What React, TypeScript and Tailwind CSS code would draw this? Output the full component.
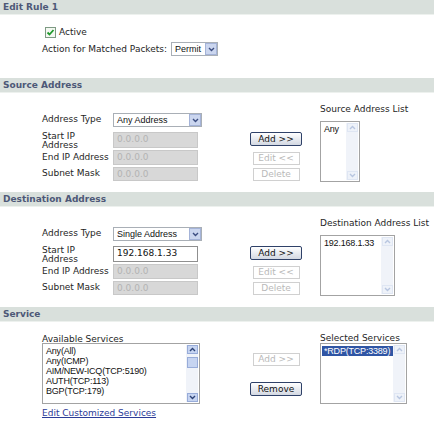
import React from "react";

const verdana = "font-['DejaVu_Sans',Verdana,sans-serif]";
const arial = "font-['Liberation_Sans',Arial,sans-serif]";

function Chevron({ up, color }: { up?: boolean; color: string }) {
  return (
    <svg width="7" height="5" viewBox="0 0 7 5">
      <path d={up ? "M1 4L3.5 1.5L6 4" : "M1 1L3.5 3.5L6 1"} stroke={color} strokeWidth="1.4" fill="none" />
    </svg>
  );
}

function Header({ title }: { title: string }) {
  return (
    <div className="h-[15px] bg-[#d9e0dc] border-b border-[#edf1ee] pl-[3px] flex items-center text-[9px] font-bold leading-none text-[#4d5877]">
      {title}
    </div>
  );
}

function Select({ value, className }: { value: string; className: string }) {
  return (
    <div className={`${className} h-[14px] border border-[#a9afb6] bg-white flex items-center`}>
      <span className={`${arial} flex-1 pl-[3px] text-[9px] leading-none text-[#111] whitespace-nowrap`}>{value}</span>
      <div className="w-[12px] h-[12px] bg-[#cbd6ef] border border-[#a4b3d8] flex items-center justify-center">
        <Chevron color="#3b4d80" />
      </div>
    </div>
  );
}

function Field({ value, disabled }: { value: string; disabled?: boolean }) {
  return (
    <div
      className={`w-[85px] h-full border flex items-center pl-[3px] text-[9px] leading-none ${
        disabled ? "bg-[#d8d8d8] border-[#c8c8c8] text-[#b3b3b3]" : "bg-white border-[#8f8f8f] text-[#111]"
      }`}
    >
      {value}
    </div>
  );
}

function Btn({ label, disabled }: { label: string; disabled?: boolean }) {
  return disabled ? (
    <div className="w-[47px] h-[13px] border border-[#d0d0d0] bg-white flex items-center justify-center text-[9px] leading-none text-[#b9b9b9]">
      {label}
    </div>
  ) : (
    <div className="w-[52px] h-[14px] border border-[#2f4168] rounded-[2px] bg-gradient-to-b from-[#ffffff] to-[#d3d8e2] flex items-center justify-center text-[9px] leading-none text-[#111]">
      {label}
    </div>
  );
}

function ListBox({
  items,
  className,
  enabled,
  selected,
}: {
  items: string[];
  className: string;
  enabled?: boolean;
  selected?: number;
}) {
  const box = enabled ? "bg-[#c6d4f1] border-[#98acd9]" : "bg-[#eef2f9] border-[#dfe6f3]";
  const arrow = enabled ? "#2d4377" : "#b8c6e0";
  return (
    <div className={`${className} h-[61px] border border-[#a3a3a3] bg-white flex`}>
      <div className={`${arial} flex-1 pt-[2px] pl-[1px] text-[9px] leading-[10px] text-[#111] tracking-[-0.2px]`}>
        {items.map((it, i) => (
          <div
            key={it}
            className={`pl-[2px] whitespace-nowrap ${i === selected ? "bg-[#2f55a4] text-white" : ""}`}
          >
            {it}
          </div>
        ))}
      </div>
      <div className="w-[12px] my-[1px] mr-[1px] bg-[#f0f3f9] flex flex-col items-center">
        <div className={`w-[11px] h-[9px] flex items-center justify-center border ${box}`}>
          <Chevron up color={arrow} />
        </div>
        {enabled && <div className="w-[11px] h-[11px] mt-[3px] bg-[#c6d4f1] border border-[#98acd9]" />}
        <div className="flex-1" />
        <div className={`w-[11px] h-[9px] flex items-center justify-center border ${box}`}>
          <Chevron color={arrow} />
        </div>
      </div>
    </div>
  );
}

function AddressForm({ type, start, single }: { type: string; start: string; single?: boolean }) {
  return (
    <div className="grid grid-cols-[71px_auto] items-center">
      <div className="h-[14px] flex items-center">Address Type</div>
      <Select value={type} className="w-[89px]" />
      <div className="mt-[4px] h-[17px] leading-[9px] pt-[1px]">Start IP Address</div>
      <div className="mt-[4px] h-[16px]">
        <Field value={start} disabled={!single} />
      </div>
      <div className="mt-[2px] h-[15px] flex items-center whitespace-nowrap">End IP Address</div>
      <div className="mt-[2px] h-[15px]">
        <Field value="0.0.0.0" disabled />
      </div>
      <div className="mt-[2px] h-[14px] flex items-center">Subnet Mask</div>
      <div className="mt-[2px] h-[14px]">
        <Field value="0.0.0.0" disabled />
      </div>
    </div>
  );
}

function AddressSection({
  title,
  type,
  start,
  single,
  listLabel,
  listItems,
  listWidth,
  height,
}: {
  title: string;
  type: string;
  start: string;
  single?: boolean;
  listLabel: string;
  listItems: string[];
  listWidth: string;
  height: string;
}) {
  return (
    <>
      <Header title={title} />
      <div className={`${height} flex`}>
        <div className="w-[250px] pl-[42px] pt-[20px]">
          <AddressForm type={type} start={start} single={single} />
        </div>
        <div className="w-[70px] pt-[39px]">
          <div className="w-[52px] flex flex-col items-center">
            <Btn label="Add >>" />
            <div className="mt-[6px]">
              <Btn label="Edit <<" disabled />
            </div>
            <div className="mt-[3px]">
              <Btn label="Delete" disabled />
            </div>
          </div>
        </div>
        <div className="pt-[11px]">
          <div className="h-[10px] leading-[10px] whitespace-nowrap">{listLabel}</div>
          <div className="mt-[7px]">
            <ListBox items={listItems} className={listWidth} />
          </div>
        </div>
      </div>
    </>
  );
}

export default function App() {
  return (
    <div className={`${verdana} w-[434px] h-[421px] overflow-hidden bg-white text-[9px] text-[#252525]`}>
      <Header title="Edit Rule 1" />
      <div className="h-[63px] pl-[42px] pt-[12px]">
        <div className="flex items-center h-[11px] pl-[3px]">
          <svg width="11" height="11" viewBox="0 0 11 11">
            <rect x="0.5" y="0.5" width="10" height="10" fill="#f4f8f2" stroke="#7d9a83" />
            <path d="M2.5 5.5L4.5 7.5L8.5 3" stroke="#1f9a2c" strokeWidth="1.8" fill="none" />
          </svg>
          <span className="ml-[3px] leading-none">Active</span>
        </div>
        <div className="mt-[4px] h-[14px] flex items-center">
          <span className="leading-none whitespace-nowrap">Action for Matched Packets:</span>
          <Select value="Permit" className="ml-[4px] w-[47px]" />
        </div>
      </div>

      <AddressSection
        title="Source Address"
        type="Any Address"
        start="0.0.0.0"
        listLabel="Source Address List"
        listItems={["Any"]}
        listWidth="w-[40px]"
        height="h-[99px]"
      />
      <AddressSection
        title="Destination Address"
        type="Single Address"
        start="192.168.1.33"
        single
        listLabel="Destination Address List"
        listItems={["192.168.1.33"]}
        listWidth="w-[75px]"
        height="h-[100px]"
      />

      <Header title="Service" />
      <div className="flex">
        <div className="w-[250px] pl-[42px] pt-[12px]">
          <div className="h-[10px] leading-[10px]">Available Services</div>
          <div className="mt-[-1px]">
            <ListBox
              items={["Any(All)", "Any(ICMP)", "AIM/NEW-ICQ(TCP:5190)", "AUTH(TCP:113)", "BGP(TCP:179)"]}
              className="w-[158px]"
              enabled
            />
          </div>
          <div className="mt-[4px] leading-[10px] text-[#2c3c98] underline">Edit Customized Services</div>
        </div>
        <div className="w-[70px] pt-[31px]">
          <div className="w-[52px] flex flex-col items-center">
            <Btn label="Add >>" disabled />
            <div className="mt-[16px]">
              <Btn label="Remove" />
            </div>
          </div>
        </div>
        <div className="pt-[11px]">
          <div className="h-[10px] leading-[10px] whitespace-nowrap">Selected Services</div>
          <div className="mt-[0px]">
            <ListBox items={["*RDP(TCP:3389)"]} className="w-[87px]" selected={0} />
          </div>
        </div>
      </div>
    </div>
  );
}
